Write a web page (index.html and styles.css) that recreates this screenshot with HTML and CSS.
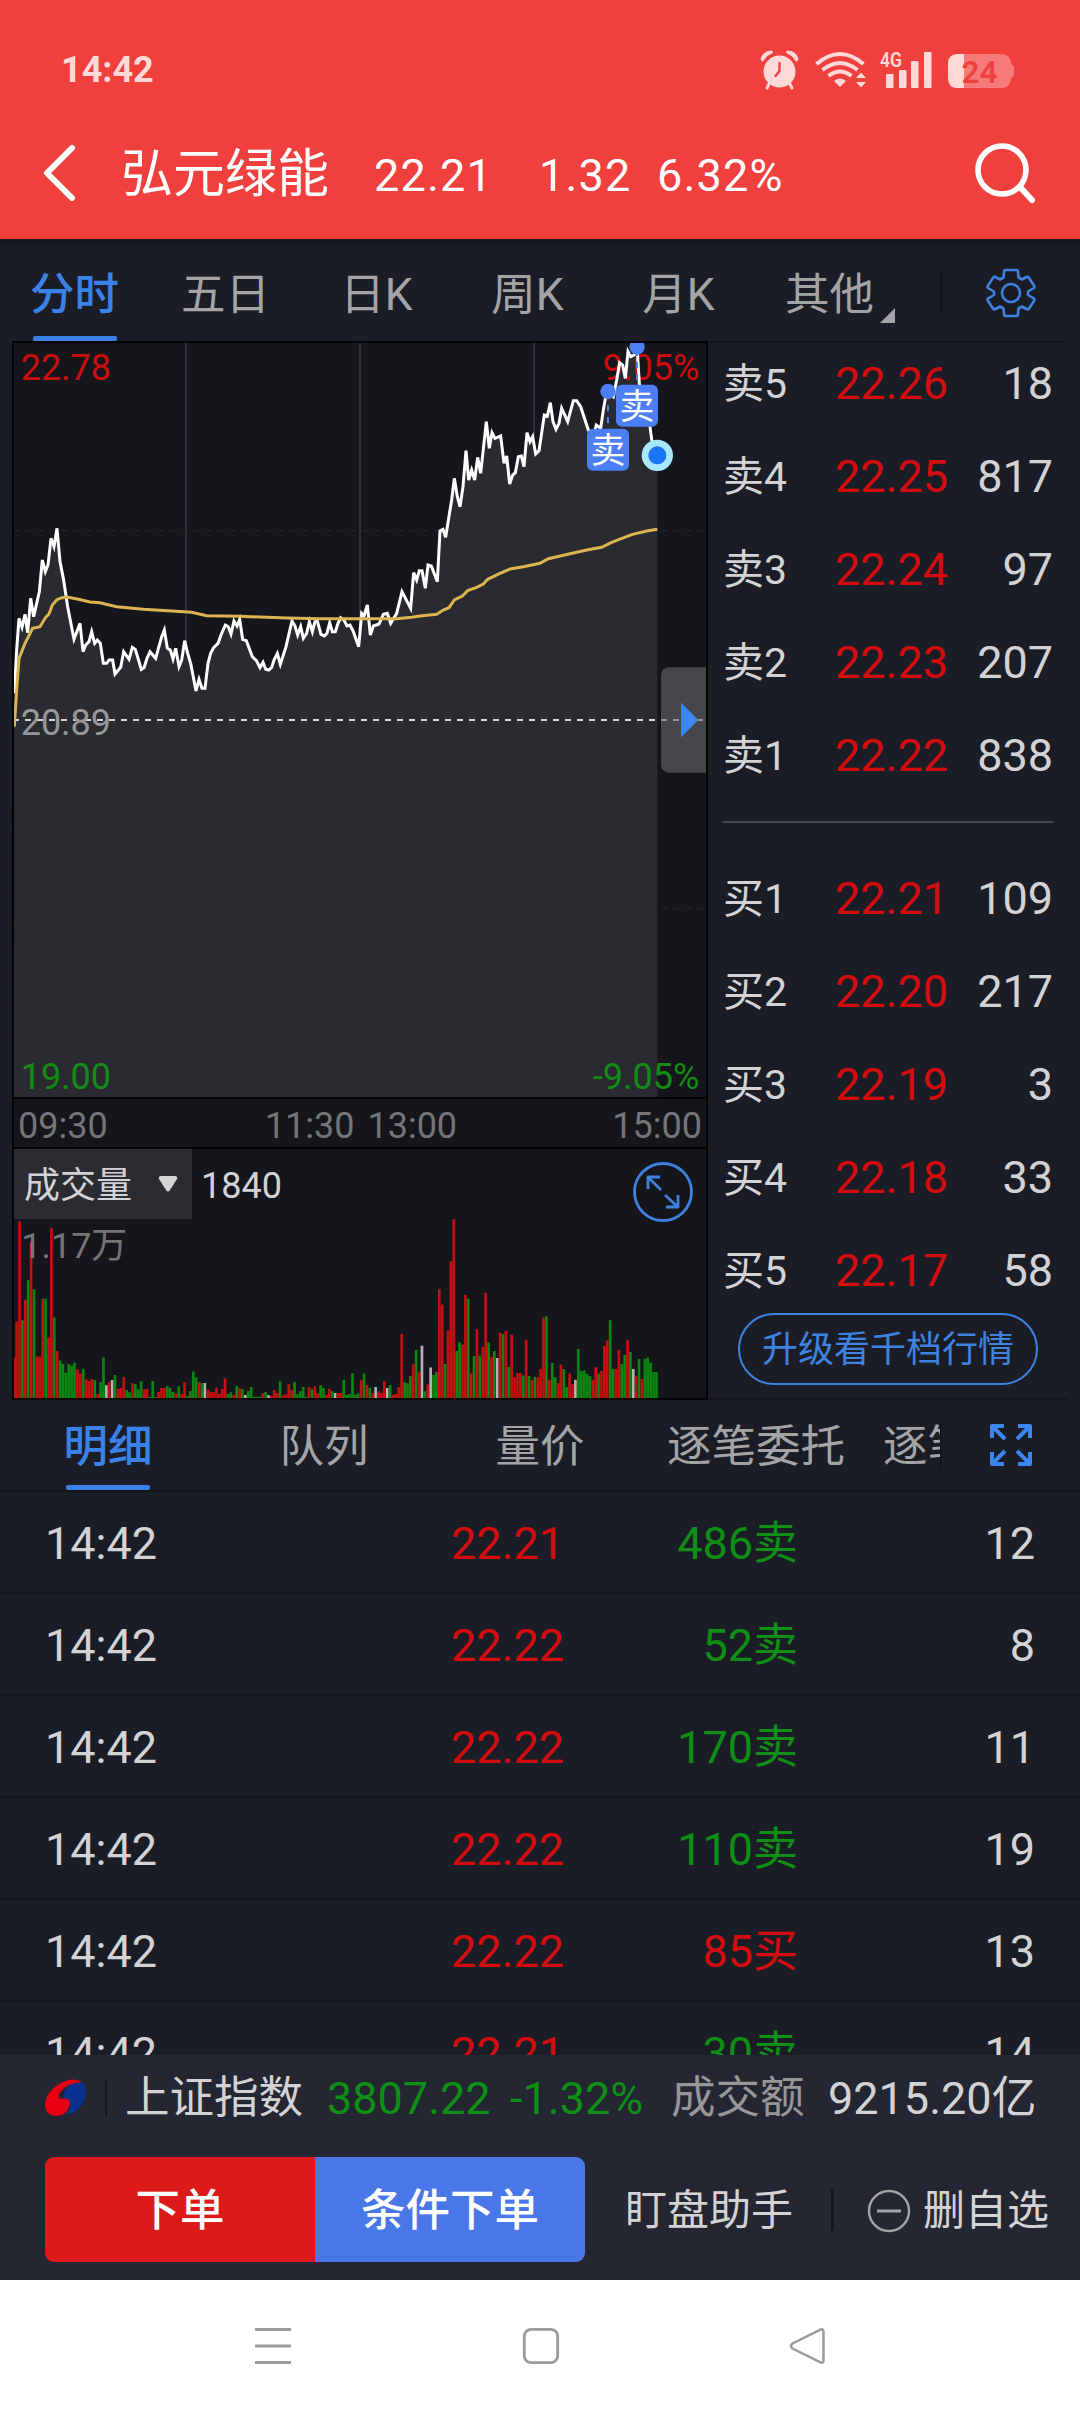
FILE: index.html
```html
<!DOCTYPE html>
<html lang="zh-CN">
<head>
<meta charset="utf-8">
<title>弘元绿能</title>
<link rel="stylesheet" href="styles.css">
</head>
<body>
<header class="top">
  <div class="status">
    <span class="clock">14:42</span>
    <svg class="status-icons" viewBox="760 46 256 46" width="256" height="46">
      <g fill="#ffd9d8" stroke="none">
        <circle cx="779.5" cy="71.5" r="16"/>
        <path d="M761 59q2-8 11-8q1 1 0 2q-6 2-9 8q-1 1-2-2zM798 59q-2-8-11-8q-1 1 0 2q6 2 9 8q1 1 2-2z" stroke="#ffd9d8"/>
        <path d="M770 82l-3 6M789 82l3 6" stroke="#ffd9d8" stroke-width="3" stroke-linecap="round"/>
        <path d="M779.5 63v8l-4 5" fill="none" stroke="#ef413f" stroke-width="2.4" stroke-linecap="round" stroke-linejoin="round"/>
        <path d="M840 87l-6-6q6-5 12 0z"/>
        <path d="M861 72.500l5 5.500h-10zM861 87.500l5-5.500h-10z"/>
      </g>
      <g fill="none" stroke="#ffd9d8" stroke-width="4">
        <path d="M816.500 64q23.500-20 47 0"/>
        <path d="M822.500 70q17.500-14 35 0"/>
        <path d="M828.500 76q11.500-9 23 0"/>
      </g>
      <text class="net" x="880" y="67" textLength="22" lengthAdjust="spacingAndGlyphs">4G</text>
      <g fill="#ffd9d8">
        <rect x="886" y="74" width="7.500" height="14" rx="1"/><rect x="899" y="70" width="7.500" height="18" rx="1"/>
        <rect x="911" y="61" width="7.500" height="27" rx="1"/><rect x="924" y="52" width="7.500" height="36" rx="1"/>
      </g>
      <path d="M958 54h43q10 0 10 10q3 1 3 3v8q0 2-3 3q0 10-10 10h-43q-10 0-10-10v-14q0-10 10-10z" fill="#f67a78"/>
      <path d="M964 54h-6q-10 0-10 10v14q0 10 10 10h6z" fill="#ffd9d8"/>
      <text class="battery" x="961.500" y="82.500" textLength="36" lengthAdjust="spacingAndGlyphs">24</text>
    </svg>
  </div>
  <div class="title-bar">
    <svg class="back" viewBox="0 0 34 60" width="34" height="60"><path d="M30 5L5 30L30 55" fill="none" stroke="#fff" stroke-width="6" stroke-linecap="round" stroke-linejoin="round"/></svg>
    <h1 class="stock">弘元绿能</h1>
    <span class="last">22.21</span>
    <span class="change">1.32</span>
    <span class="pct">6.32%</span>
    <svg class="search" viewBox="0 0 66 66" width="66" height="66"><circle cx="29" cy="29" r="24" fill="none" stroke="#fff" stroke-width="5.600"/><path d="M47 46L59 59" stroke="#fff" stroke-width="6" stroke-linecap="round"/></svg>
  </div>
</header>

<nav class="periods">
  <div class="period active">分时</div>
  <div class="period">五日</div>
  <div class="period">日K</div>
  <div class="period">周K</div>
  <div class="period">月K</div>
  <div class="period more">其他</div>
  <div class="settings">
    <svg viewBox="-26 -26 52 52" width="52" height="52" fill="none" stroke="#3f82e0" stroke-width="2.600" stroke-linejoin="round"><circle r="9"/><path d="M-5.500-23H5.500Q7-23 7-21L7.500-15.500L11-13.500L15.500-16Q17-17 18-15L23-7.500Q24-6 23-5L17-1.500V2L23 5.500Q24 6.500 23 8L18 15.500Q17 17 15.500 16L11 13.500L7.500 15.500L7 21Q7 23 5.500 23H-5.500Q-7 23-7 21L-7.500 15.500L-11 13.500L-15.500 16Q-17 17-18 15.500L-23 8Q-24 6.500-23 5.500L-17 2V-1.500L-23-5Q-24-6-23-7.500L-18-15Q-17-17-15.500-16L-11-13.500L-7.500-15.500L-7-21Q-7-23-5.500-23Z"/></svg>
  </div>
</nav>

<main class="quote">
  <section class="charts">
    <svg class="price-chart" viewBox="42 39 2076 2262" width="692" height="754">
      <g stroke="#2e303b" stroke-width="6"><path d="M558 39V2301M1080 39V2301M1602 39V2301"/></g>
      <path d="M42 602H2118M42 1736H2118" stroke="#23252c" stroke-width="4" stroke-dasharray="18 18"/>
      <path id="area" class="area"/>
      <path d="M42 1170H2118" stroke="#d6d6d8" stroke-width="6" stroke-dasharray="18 18" stroke-dashoffset="3"/>
      <g class="scale">
        <text class="up" x="62" y="150">22.78</text>
        <text class="up" x="2098" y="150" text-anchor="end">9.05%</text>
        <text class="mid" x="62" y="1215">20.89</text>
        <text class="down" x="62" y="2277">19.00</text>
        <text class="down" x="2098" y="2277" text-anchor="end">-9.05%</text>
      </g>
      <polyline id="price" class="price" points="43,1090 50,960 57,865 66,892 75,853 83,908 92,805 101,860 110,820 118,785 127,690 136,725 144,705 153,625 162,650 171,595 180,695 190,745 203,830 222,928 240,880 249,965 257,945 267,935 275,905 284,940 292,930 301,940 310,1000 320,1000 327,990 338,990 345,1032 362,1012 371,965 387,988 397,952 406,958 424,1018 432,1013 441,985 450,965 467,985 485,920 493,900 502,955 511,960 519,987 527,955 537,1010 545,990 554,932 563,970 572,1000 588,1083 597,1048 606,1075 615,1075 624,1000 632,970 641,953 654,940 665,910 676,885 685,890 693,912 702,873 711,888 719,868 728,928 739,932 757,980 770,993 780,1013 789,997 797,1018 806,1020 815,1012 822,990 832,970 841,1003 858,950 876,873 885,888 893,915 902,890 910,925 920,910 928,875 937,905 945,875 952,873 963,913 973,918 981,910 989,878 997,905 1006,905 1014,880 1022,863 1032,870 1041,888 1050,885 1060,905 1076,950 1085,850 1092,858 1102,825 1111,915 1120,888 1137,882 1150,853 1162,850 1172,880 1190,850 1206,785 1232,835 1241,728 1250,750 1258,722 1266,722 1276,775 1284,705 1294,708 1312,755 1320,603 1329,598 1337,622 1346,565 1355,510 1363,445 1372,500 1380,530 1389,470 1398,362 1406,450 1415,420 1424,450 1433,382 1442,430 1459,275 1468,355 1476,308 1485,325 1502,318 1512,400 1520,378 1529,462 1538,435 1546,428 1555,380 1564,378 1572,410 1581,308 1590,335 1598,320 1607,372 1617,362 1633,255 1642,258 1651,218 1659,275 1668,298 1677,280 1685,235 1703,275 1720,212 1730,212 1742,230 1765,300 1780,320 1789,285 1802,295 1810,240 1820,183 1840,200 1850,150 1859,98 1868,105 1876,145 1884,65 1892,80 1902,75 1912,65 1918,160 1950,290 1956,335 1972,375"/>
      <polyline class="average" points="43,1190 50,1080 57,985 75,940 98,895 120,890 137,862 147,852 157,825 170,810 185,803 205,802 235,808 270,816 300,818 350,830 430,838 575,847 620,857 720,859 860,864 960,866 1080,866 1190,866 1235,862 1260,858 1310,853 1330,840 1347,833 1363,810 1387,798 1403,782 1430,772 1450,762 1463,748 1500,730 1530,717 1570,710 1620,700 1645,686 1720,669 1760,660 1805,652 1835,637 1895,614 1940,603 1972,598"/>
      <g class="trades">
        <path d="M1824 190V300M1911 60V180" stroke="#4c7ef0" stroke-width="6" stroke-dasharray="18 18"/>
        <circle cx="1824" cy="184" r="23"/><circle cx="1911" cy="51" r="23"/>
        <rect x="1761" y="296" width="126" height="126" rx="18"/><rect x="1848" y="164" width="126" height="126" rx="18"/>
        <text x="1824" y="400">卖</text><text x="1911" y="268">卖</text>
      </g>
      <circle cx="1972" cy="376" r="37" fill="#1b75f2" stroke="#a8e8ff" stroke-width="20"/>
      <path d="M2118 1012H1989Q1963 1012 1963 1038V1302Q1963 1328 1989 1328H2118Z" transform="translate(20)" fill="#66676a" fill-opacity=".6"/>
      <path d="M2043 1118L2095 1170L2043 1222Z" fill="#3b86f0"/>
    </svg>
    <div class="time-axis"><span>09:30</span><span class="noon">11:30 13:00</span><span>15:00</span></div>
    <div class="volume">
      <div class="volume-head">
        <div class="indicator"><span>成交量</span><svg viewBox="0 0 20 16" width="20" height="16"><path d="M3 0H17Q20 0 19 3L12 14Q10 17 8 14L1 3Q0 0 3 0Z" fill="#d3d3d5"/></svg></div>
        <span class="volume-now">1840</span>
        <svg class="expand" viewBox="-30 -30 60 60" width="60" height="60" fill="none" stroke="#3f82e0" stroke-width="2.800"><circle r="28.500"/><path d="M-2-2L-15-15M-15-3V-15H-3M2 3L15 15M15 3V15H3" stroke-linejoin="round"/></svg>
      </div>
      <svg id="bars" class="bars" viewBox="42 473 2076 541" width="692" height="180">
        <text class="volume-max" x="62" y="594">1.17万</text>
      </svg>
    </div>
  </section>

  <section class="book">
    <div class="level"><span>卖5</span><b>22.26</b><i>18</i></div>
    <div class="level"><span>卖4</span><b>22.25</b><i>817</i></div>
    <div class="level"><span>卖3</span><b>22.24</b><i>97</i></div>
    <div class="level"><span>卖2</span><b>22.23</b><i>207</i></div>
    <div class="level"><span>卖1</span><b>22.22</b><i>838</i></div>
    <hr class="spread">
    <div class="level"><span>买1</span><b>22.21</b><i>109</i></div>
    <div class="level"><span>买2</span><b>22.20</b><i>217</i></div>
    <div class="level"><span>买3</span><b>22.19</b><i>3</i></div>
    <div class="level"><span>买4</span><b>22.18</b><i>33</i></div>
    <div class="level"><span>买5</span><b>22.17</b><i>58</i></div>
    <div class="upgrade">升级看千档行情</div>
  </section>
</main>

<nav class="detail-tabs">
  <div class="scroller">
    <div class="detail active">明细</div>
    <div class="detail">队列</div>
    <div class="detail">量价</div>
    <div class="detail">逐笔委托</div>
    <div class="detail">逐笔成交</div>
  </div>
  <svg class="full" viewBox="0 0 42 42" width="42" height="42" fill="none" stroke="#3b86f0" stroke-width="4" stroke-linejoin="round"><path d="M2 14V2H14M3 3L15 15M28 2H40V14M39 3L27 15M2 28V40H14M3 39L15 27M28 40H40V28M39 39L27 27"/></svg>
</nav>

<section class="ticks">
  <div class="tick"><span>14:42</span><span class="rise">22.21</span><span class="fall">486卖</span><span>12</span></div>
  <div class="tick"><span>14:42</span><span class="rise">22.22</span><span class="fall">52卖</span><span>8</span></div>
  <div class="tick"><span>14:42</span><span class="rise">22.22</span><span class="fall">170卖</span><span>11</span></div>
  <div class="tick"><span>14:42</span><span class="rise">22.22</span><span class="fall">110卖</span><span>19</span></div>
  <div class="tick"><span>14:42</span><span class="rise">22.22</span><span class="rise">85买</span><span>13</span></div>
  <div class="tick"><span>14:42</span><span class="rise">22.21</span><span class="fall">30卖</span><span>14</span></div>
</section>

<footer class="dock">
  <div class="index">
    <svg class="logo" viewBox="0 0 42 40" width="42" height="40">
      <path d="M38 5C43 12 41 23 33 31Q28 36 21 37Q25 32 25 26Q25 20 19 20Q17 8 31 5Q36 4 38 5Z" fill="#07308f"/>
      <path d="M37 4Q22 5 16 13Q12 18 15 21Q25 19 25 26Q22 38 12 38Q0 38 0 26Q1 14 14 6Q28-2 37 4Z" fill="#e60012"/>
    </svg>
    <i class="rule"></i>
    <span class="index-name">上证指数</span>
    <span class="index-last">3807.22</span>
    <span class="index-pct">-1.32%</span>
    <span class="turnover-label">成交额</span>
    <span class="turnover">9215.20亿</span>
  </div>
  <div class="actions">
    <div class="order">下单</div>
    <div class="order conditional">条件下单</div>
    <span class="helper">盯盘助手</span>
    <i class="action-rule"></i>
    <svg class="minus" viewBox="-22 -22 44 44" width="44" height="44" fill="none" stroke="#a4a4a7" stroke-width="2.400"><circle r="20"/><path d="M-12 0H12" stroke-width="3"/></svg>
    <span class="remove">删自选</span>
  </div>
</footer>

<div class="system-nav">
  <svg viewBox="0 0 40 40" width="40" height="40" fill="none" stroke="#9b9b9b" stroke-width="3"><path d="M2 3.500H38M2 20H38M2 36.500H38"/></svg>
  <svg viewBox="0 0 40 40" width="40" height="40" fill="none" stroke="#9b9b9b" stroke-width="2.800"><rect x="3.300" y="3.300" width="33.400" height="33.400" rx="7"/></svg>
  <svg viewBox="0 0 40 40" width="40" height="40" fill="none" stroke="#9b9b9b" stroke-width="2.500"><path d="M32 3.800Q35.500 2 35.500 6V34Q35.500 38 32 36.200L4.500 22.500Q1.500 20 4.500 17.500Z"/></svg>
</div>
<script src="chart.js"></script>
</body>
</html>
```
FILE: chart.js
```js
const price = document.getElementById('price').getAttribute('points');
document.getElementById('area').setAttribute('d', 'M42,2301L' + price + 'V2301Z');

// Minute volumes: r = rising, g = falling, w = unchanged.
const volumes = ('r230 r531 g234 r295 g354 r468 g327 r126 r124 r299 g298 r182 r512 g242 r141 g113 g102 g76 g102 g97 g106 r86 r74 g88 r56 r51 r57 g54 r12 g48 g122 w38 r48 w54 g69 r27 r30 r63 g24 g17 r45 g42 g26 g50 r26 r27 g3 g51 g3 r18 r30 r30 g35 g30 g18 r14 g35 r11 r47 g6 g21 g80 g62 r47 g45 w45 r25 r18 r17 r31 r12 r27 r59 g12 g17 r9 g36 r29 g27 w9 g21 g33 g4 g4 g4 r14 g18 w8 r7 r24 r15 g50 r8 r11 r41 r24 g48 g11 g20 g33 g4 r33 g27 r35 r14 g38 g30 r10 r27 g20 w15 r15 r15 g54 g9 g12 g75 g10 g14 '
  + 'r54 g74 r39 g31 r14 w33 r20 r16 r51 w30 g38 r9 r12 r32 r192 g48 g44 g66 r102 g144 r78 w157 g20 r41 w92 g70 g78 r327 r281 g102 r204 r412 r537 g141 g167 r161 r310 g298 r74 g126 r207 g128 r153 r316 g167 r123 g141 w120 r196 g192 r202 g93 r190 r63 r75 r75 g68 r174 g66 r54 g63 r62 r87 r242 g246 r53 g105 g62 r45 r101 g87 g32 r74 r42 w55 g147 g81 g83 g72 g66 r55 r93 g74 r81 r156 r173 g234 g87 r87 r144 g102 g129 r174 g138 w87 r65 g117 r57 g118 g122 g106 g78 g78').split(' ');
const colors = { r: '#c31012', g: '#0b8711', w: '#b4b4b6' };
const paths = { r: 'M43,1014V892', g: '', w: '' };
const step = (1971 - 48) / (volumes.length - 1);
volumes.forEach((v, i) => {
  paths[v[0]] += `M${(48 + i * step).toFixed(1)},1014V${1014 - v.slice(1)}`;
});
const svg = document.getElementById('bars');
for (const k of ['r', 'g', 'w']) {
  const p = document.createElementNS('http://www.w3.org/2000/svg', 'path');
  p.setAttribute('d', paths[k]);
  p.setAttribute('stroke', colors[k]);
  p.setAttribute('stroke-width', '8');
  svg.prepend(p);
}
```
FILE: styles.css
```css
* { box-sizing: border-box; }
body {
  margin: 0;
  width: 1080px;
  height: 2412px;
  overflow: hidden;
  background: #1b1d26;
  color: #d3d3d5;
  font-family: Roboto, "Noto Sans CJK SC", sans-serif;
  font-size: 45px;
  line-height: 1;
  white-space: nowrap;
}
svg { display: block; flex: none; }
i, b { font-style: normal; font-weight: 400; }

.top { height: 239px; background: #ef403e; color: #fff; }
.status { display: flex; align-items: center; height: 139px; padding-left: 61px; }
.status-icons { margin-top: -2px; }
.clock { width: 699px; font-size: 36px; font-weight: 700; color: #ffd9d8; }
.net { font: 600 21px Roboto, sans-serif; fill: #ffd9d8; }
.battery { font: 600 31px Roboto, sans-serif; fill: #ef413f; }
.title-bar { display: flex; align-items: center; height: 70px; }
.back { margin-left: 42px; margin-top: -2px; }
.stock { width: 253px; margin: 2px 0 0 45px; font-size: 52px; font-weight: 400; }
.last { width: 165px; }
.change { width: 118px; }
.pct { width: 316px; }
.last, .change, .pct { padding-top: 3px; letter-spacing: 1.2px; }
.search { margin-top: -1px; }

.periods {
  display: flex;
  height: 102px;
  padding-top: 6px;
  border-top: 6px solid #17181e;
}
.period { position: relative; width: 151px; height: 90px; padding-top: 22px; text-align: center; font-size: 44.500px; color: #a4a4a7; }
.period:first-child { margin-left: -1px; }
.active { color: #3b82e8; font-weight: 500; }
.active::after {
  content: "";
  position: absolute;
  left: 50%;
  bottom: 0;
  width: 84px;
  height: 5px;
  margin-left: -42px;
  border-radius: 2px;
  background: #3b82e8;
}
.more::after {
  content: "";
  position: absolute;
  right: 10px;
  bottom: 18px;
  width: 15px;
  height: 15px;
  background: #a4a4a7;
  clip-path: polygon(100% 0, 100% 100%, 0 100%);
}
.settings { width: 104px; height: 45px; margin: 19px 0 0 35px; padding-left: 43px; border-left: 2px solid #15161d; }
.settings svg { margin-top: -3px; }

.quote { display: flex; height: 1059px; padding-left: 12px; }
.charts { width: 696px; height: 1059px; border: 2px solid #050507; background: #15161b; }
.area { fill: #2a2b30; }
.price { fill: none; stroke: #fff; stroke-width: 9; }
.average { fill: none; stroke: #dcb550; stroke-width: 9; }
.scale { font-size: 108px; }
.up { fill: #cb0d0f; }
.mid { fill: #97979a; }
.down { fill: #148b19; }
.trades { fill: #4c7ef5; }
.trades text { fill: #fff; font-size: 105px; text-anchor: middle; }
.time-axis {
  display: flex;
  justify-content: space-between;
  align-items: center;
  height: 52px;
  padding: 5px 4px 0 4px;
  border: solid #050507;
  border-width: 2px 0;
  font-size: 36px;
  color: #757578;
}
.noon { margin-right: -2px; word-spacing: 4px; }
.volume-head { display: flex; height: 69px; }
.indicator { display: flex; align-items: center; gap: 26px; width: 178px; height: 70px; padding-left: 10px; background: #2b2c31; font-size: 36px; }
.indicator span { padding-top: 3px; }
.volume-now { width: 430px; padding: 19px 0 0 9px; font-size: 36px; }
.expand { margin-top: 13px; margin-left: 11px; }
.volume-max { font-size: 108px; fill: #757578; }

.book { width: 360px; border: solid #15161d; border-width: 2px 0; }
.level { display: grid; grid-template-columns: 112px 120px 98px; align-items: center; height: 93px; margin-left: 15px; }
.level:first-child { margin-top: -6px; }
.level span { padding-top: 2px; font-size: 41px; }
.level b { color: #d30d0f; }
.level i { text-align: right; }
.spread { width: 330px; height: 2px; margin: 19px 0 29px 15px; border: 0; background: #444654; }
.upgrade {
  width: 300px;
  height: 72px;
  margin: -4px 0 0 30px;
  border: 2px solid #3f82e0;
  border-radius: 36px;
  color: #3f82e0;
  font-size: 36px;
  line-height: 70px;
  text-align: center;
}

.detail-tabs { display: flex; align-items: center; height: 92px; border-bottom: 2px solid #15161d; }
.scroller { display: flex; width: 942px; height: 90px; overflow: hidden; position: relative; }
.scroller::after { content: ""; position: absolute; right: 0; top: 22px; width: 2px; height: 46px; background: #15161d; }
.detail { position: relative; flex: none; width: 216px; padding-top: 25px; text-align: center; font-size: 44.500px; color: #a4a4a7; }
.detail.active { color: #3b82e8; }
.full { margin-left: 48px; }

.ticks { height: 563px; overflow: hidden; }
.tick {
  display: grid;
  grid-template-columns: 406px 149px 198px 237px;
  align-items: center;
  height: 102px;
  padding-top: 2px;
  padding-left: 45px;
  border-bottom: 2px solid #15161d;
}
.tick span:nth-child(n+3) { text-align: right; }
.rise { color: #d30d0f; }
.fall { color: #0f8f15; }

.dock { height: 225px; background: #242632; }
.index { display: flex; align-items: center; height: 86px; padding-left: 45px; }
.index span { padding-top: 1px; }
.rule { width: 2px; height: 36px; margin: 0 18px; background: #15161d; }
.index-name { width: 202px; font-size: 44.500px; }
.index-last { width: 183px; color: #0f8f15; }
.index-pct { width: 161px; color: #0f8f15; }
.turnover-label { width: 157px; color: #97979a; font-size: 44.500px; }
.actions { display: flex; align-items: center; height: 105px; margin: 16px 0 0 45px; }
.order { width: 270px; height: 105px; border-radius: 9px 0 0 9px; background: #dc1a1a; color: #fff; font-size: 44.500px; font-weight: 500; line-height: 109px; text-align: center; }
.conditional { border-radius: 0 9px 9px 0; background: #4a77e8; }
.helper { width: 246px; padding-top: 3px; padding-left: 40px; font-size: 42px; }
.action-rule { width: 3px; height: 42px; background: #15161d; }
.minus { margin-left: 33px; margin-top: 2px; }
.remove { margin-left: 12px; padding-top: 3px; font-size: 42px; }

.system-nav { display: flex; align-items: center; justify-content: space-between; height: 132px; padding: 0 252px 0 253px; background: #fff; }
```
